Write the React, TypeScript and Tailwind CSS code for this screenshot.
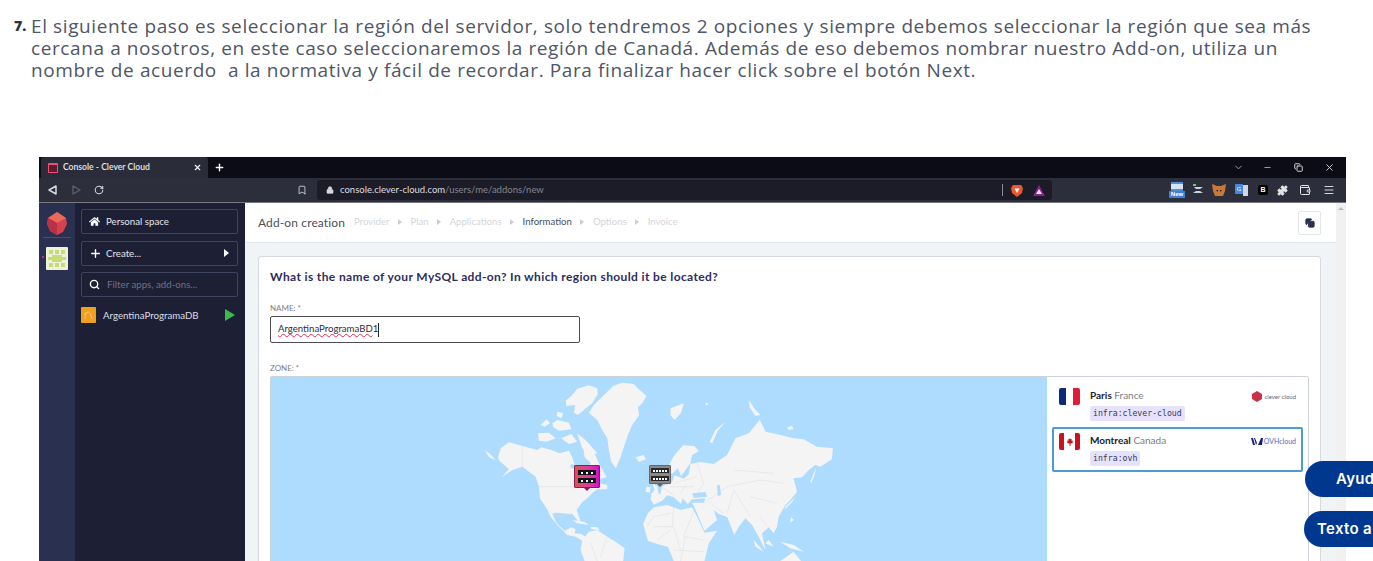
import React from 'react';
import { ChevronDown, Lock, Minus, Plus, RotateCw, Search, X, Menu, Bookmark, Puzzle, Wallet, Copy } from 'lucide-react';
import { FaHome } from 'react-icons/fa';

const uiFont = "font-['Lato','Noto_Sans',sans-serif]";

function Crumb({ label, active }: { label: string; active?: boolean }) {
  return <span className={active ? 'text-[#4a4d5a]' : 'text-[#d3d6dc]'}>{label}</span>;
}

function CrumbArrow() {
  return <span className="mx-[8.5px] w-0 h-0 border-y-[3px] border-y-transparent border-l-[4px] border-l-[#c9ccd2]" />;
}

function ExtensionIcons() {
  return (
    <div className="flex items-center ml-[117px] h-full">
      <div className="w-[16px] h-[16px] flex flex-col items-center">
        <div className="w-[12px] h-[9px] bg-[#d5e2f2] border-y-2 border-[#4f8ed8]" />
        <div className="w-[16px] h-[7px] bg-[#3f7fd4] text-white text-[6px] leading-[7px] text-center font-bold font-['Liberation_Sans',sans-serif]">New</div>
      </div>
      <svg className="ml-[7px]" width="12" height="12" viewBox="0 0 12 12">
        <rect x="1" y="0" width="3" height="2" fill="#4ade50" />
        <path d="M2 3h9L8 5H4zM1 9l3-2h4l3 2z" fill="#c9d6dd" />
      </svg>
      <svg className="ml-[8px]" width="14" height="12" viewBox="0 0 14 12">
        <path d="M0 0l5 2h4l5-2-1 7-2 5H3L1 7z" fill="#c87838" />
        <path d="M4 6h2v2zM10 6H8v2z" fill="#2a2016" />
      </svg>
      <div className="ml-[9px] w-[13px] h-[12px] flex">
        <div className="w-[8px] h-[10px] bg-[#4a88e0] rounded-[1px] text-white text-[6px] leading-[10px] text-center">G</div>
        <div className="w-[5px] h-[11px] mt-[1px] bg-[#cfd8e6]" />
      </div>
      <div className="ml-[10px] w-[10px] h-[10px] bg-black rounded-[2px] text-white text-[7px] leading-[10px] text-center font-bold font-['Liberation_Sans',sans-serif]">B</div>
      <Puzzle className="ml-[9px] fill-[#e4e4e8] text-[#e4e4e8]" size={11} />
      <Wallet className="ml-[11px] text-[#e4e4e8]" size={12} />
      <Menu className="ml-[12px] text-[#d5d5da]" size={12} />
    </div>
  );
}

function Browser() {
  return (
    <div className={`${uiFont}`}>
      <div className="h-[21px] bg-[#0c0c17] flex items-center pl-[2px] text-white">
        <div className="w-[167px] h-full bg-[#2b2c39] flex items-center pl-[7px] rounded-t-[3px]">
          <span className="w-[10px] h-[10px] border border-[#f0506e] border-t-2 bg-[#5e1c34] rounded-[1px] shrink-0" />
          <span className="ml-[5px] text-[8.6px] font-semibold text-[#e6e6ea]">Console - Clever Cloud</span>
          <X className="ml-auto mr-[6px] text-white" size={9} strokeWidth={3} />
        </div>
        <Plus className="ml-[6px]" size={11} strokeWidth={3} />
        <ChevronDown className="ml-auto text-[#a5a6ad]" size={11} />
        <Minus className="ml-[19px] text-[#c9c9ce]" size={9} />
        <Copy className="ml-[22px] text-[#dcdce0]" size={9} strokeWidth={2.5} />
        <X className="ml-[21px] mr-[11px] text-[#dcdce0]" size={11} />
      </div>
      <div className="h-[25px] bg-[#2d2e3c] border-b border-[#777883] flex items-center pl-[9px] text-[#d8d8dd]">
        <svg width="9" height="10" viewBox="0 0 9 10">
          <path d="M8 1v8L1 5z" fill="none" stroke="#d8d8dd" strokeWidth="1.5" strokeLinejoin="round" />
        </svg>
        <svg className="ml-[15px]" width="9" height="10" viewBox="0 0 9 10">
          <path d="M1 1v8l7-4z" fill="none" stroke="#5e5f6b" strokeWidth="1.3" strokeLinejoin="round" />
        </svg>
        <RotateCw className="ml-[13px]" size={10} strokeWidth={2.5} />
        <Bookmark className="ml-[193px]" size={10} strokeWidth={2} />
        <div className="ml-[10px] w-[735px] h-[20px] rounded-[3px] bg-[#1b1c28] flex items-center pl-[9px] shrink-0">
          <Lock className="fill-[#d8d8dd]" size={8} />
          <span className="ml-[6px] text-[9.5px] text-[#dddde2]">
            console.clever-cloud.com<span className="text-[#85868f]">/users/me/addons/new</span>
          </span>
          <span className="ml-auto w-px h-[12px] bg-[#8a8b94]" />
          <svg className="ml-[8px]" width="12" height="13" viewBox="0 0 12 13">
            <path d="M2 1h8l2 3-1 5-5 4-5-4-1-5z" fill="#e9582e" />
            <path d="M3.5 4.5h5L6 9z" fill="#fff" />
          </svg>
          <svg className="ml-[10px] mr-[7px]" width="12" height="11" viewBox="0 0 12 11">
            <path d="M6 0l6 11H0z" fill="#8b1f8f" />
            <path d="M6 4l3 5H3z" fill="#f3e4e9" />
          </svg>
        </div>
        <ExtensionIcons />
      </div>
    </div>
  );
}

function SideButton({ children }: { children: React.ReactNode }) {
  return (
    <div className="h-[25px] border border-[#3d4360] rounded-[2px] flex items-center pl-[7px] text-[9.7px] text-[#e4e5ea]">
      {children}
    </div>
  );
}

function Sidebar() {
  return (
    <div className={`flex shrink-0 ${uiFont}`}>
      <div className="w-[36px] bg-[#2a3050] flex flex-col items-center pt-[9px] relative">
        <svg width="20" height="23" viewBox="0 0 20 23">
          <path d="M10 0l9 6 1 6-4 8-6 3-7-4-3-7 1-6z" fill="#d8404e" />
          <path d="M10 0l9 6-9 5-9-5z" fill="#e96a58" />
          <path d="M10 11v12l-7-4-3-7 1-6z" fill="#b8324a" />
        </svg>
        <div className="w-[28px] h-px bg-[#4a506c] mt-[2px]" />
        <svg className="mt-[9px]" width="22" height="23" viewBox="0 0 22 23">
          <rect width="22" height="23" rx="1" fill="#eef2d8" />
          <path d="M3 3h4v4H3zM9 3h4v4H9zM15 3h4v4h-4zM6 8h10v7H6zM2 10h4v3H2zM16 10h4v3h-4zM3 16h4v4H3zM15 16h4v4h-4zM9 16h4v4H9z" fill="#c6dc78" />
        </svg>
        <span className="absolute left-[3px] top-[53px] w-[2px] h-[2px] rounded-full bg-[#f0308c]" />
      </div>
      <div className="w-[170px] bg-[#1d2035] pl-[6px] pr-[7px] pt-[6px] flex flex-col gap-[6.5px]">
        <SideButton>
          <FaHome className="text-white" size={11} />
          <span className="ml-[6px]">Personal space</span>
        </SideButton>
        <SideButton>
          <Plus className="text-white" size={13} strokeWidth={2.5} />
          <span className="ml-[4px]">Create...</span>
          <span className="ml-auto mr-[8px] w-0 h-0 border-y-[4px] border-y-transparent border-l-[5px] border-l-white" />
        </SideButton>
        <SideButton>
          <Search className="text-white" size={11} strokeWidth={3} />
          <span className="ml-[7px] text-[#6d7186]">Filter apps, add-ons...</span>
        </SideButton>
        <div className="flex items-center mt-[3px] h-[17px] text-[9.7px] text-[#dcdde3]">
          <span className="w-[15px] h-[16px] rounded-[1px] bg-[#f0a020] shrink-0 flex items-center justify-center">
            <svg width="11" height="11" viewBox="0 0 11 11">
              <path d="M2 9C2 5 3 2 5 2s3 3 4 7M1 4c2-1 3-1 4-2" fill="none" stroke="#f6cf86" strokeWidth="0.8" />
            </svg>
          </span>
          <span className="ml-[7px]">ArgentinaProgramaDB</span>
          <span className="ml-auto mr-[3px] w-0 h-0 border-y-[6px] border-y-transparent border-l-[10px] border-l-[#3dba4e]" />
        </div>
      </div>
    </div>
  );
}

function WorldMap() {
  // land shapes, traced by hand from the screenshot
  return (
    <svg className="w-full h-full block blur-[0.3px]" viewBox="-510 21 2331 552" preserveAspectRatio="none">
      <rect x="-510" y="21" width="2331" height="552" fill="#aedcff" />
      <g fill="#f4f4f4">
        {/* greenland and the arctic islands */}
        <path d="M518 48 545 38 580 42 592 55 618 78 605 100 592 112 596 135 575 165 562 195 552 225 540 262 526 295 512 275 505 240 500 205 485 180 470 150 445 128 460 105 480 85z" />
        <path d="M392 78 410 56 445 46 470 55 472 72 455 100 432 118 412 135 400 128 404 105 378 108 375 92z" />
        <path d="M350 125 368 130 362 145 348 138zM300 165 318 148 328 160 312 170zM335 160 350 150 385 158 392 178 355 182 338 172zM292 190 325 188 345 205 318 215 295 212zM362 205 392 192 410 215 385 222zM410 190 440 215 470 250 455 255 425 235z" />
        {/* north and central america */}
        <path d="M132 240 148 252 165 270 145 262zM172 262 180 235 205 217 245 228 290 240 302 232 332 240 358 250 385 242 395 262 402 285 420 300 440 302 450 278 432 262 428 232 462 250 476 282 498 322 480 326 470 338 500 345 500 358 470 358 452 372 440 385 425 396 408 420 420 455 412 452 395 432 365 430 345 428 335 432 348 460 372 482 392 472 405 478 402 490 422 492 440 505 425 512 405 500 380 495 350 465 330 440 318 415 298 385 295 350 285 320 245 290 215 300 182 322 205 298 176 272z" />
        <path d="M395 450 430 455 445 465 410 460zM450 470 470 472 478 480 452 478z" />
        {/* south america */}
        <path d="M425 510 445 485 470 480 500 500 525 515 552 535 548 573 432 573 420 540z" />
        {/* small islands in the north atlantic and arctic */}
        <path d="M585 262 610 255 616 268 595 276zM636 342 650 348 655 372 630 375 642 360zM618 350 630 352 628 368 615 365zM690 115 730 100 722 128 702 150 690 135zM795 100 804 98 798 108zM925 90 945 120 960 135 945 138 928 112zM808 215 825 180 855 155 832 182 815 220zM1040 172 1055 168 1060 178 1045 180z" />
        {/* scandinavia */}
        <path d="M680 296 700 258 728 226 762 228 775 244 755 255 750 280 735 300 722 318 712 295 695 312z" />
        {/* eurasia */}
        <path d="M630 388 634 372 660 372 664 350 695 336 702 316 730 326 745 312 750 282 780 276 820 282 860 255 885 205 925 190 958 150 976 185 1020 195 1060 205 1090 208 1130 230 1178 235 1175 268 1140 290 1125 285 1105 300 1085 322 1060 325 1070 365 1050 390 1035 405 1015 440 1010 470 1000 490 985 472 965 490 975 540 955 500 935 465 915 445 895 470 882 495 860 440 835 432 820 420 830 450 792 482 768 425 755 398 790 398 795 385 755 388 742 402 726 385 722 402 700 382 680 376 665 392 640 404z" />
        {/* africa */}
        <path d="M608 462 622 430 640 412 680 405 720 420 755 412 772 445 792 488 830 482 805 520 792 573 700 573 682 530 650 522 622 512z" />
        {/* japan, sakhalin, indonesia, australia */}
        <path d="M1110 335 1128 292 1122 318 1112 340zM1035 410 1062 385 1072 372 1056 395 1034 418zM985 510 1000 530 975 520zM1020 515 1060 525 1090 545 1050 535zM1020 573 1060 545 1082 573zM940 510 970 545 945 530zM1052 442 1060 450 1050 458z" />
      </g>
      {/* inland water */}
      <path d="M755 370 795 366 800 380 760 384z" fill="#aedcff" />
      <path d="M392 282 402 284 398 296 388 292z" fill="#aedcff" />
      <path d="M830 345 838 345 842 375 832 378z" fill="#aedcff" />
      <g fill="none" stroke="#dcdcdc" strokeWidth="1.5">
        <path d="M295 350H400M245 228V290M322 420 352 440 395 432M372 482 392 472" />
        <path d="M450 520 470 573M500 500 480 560" />
        <path d="M640 470H700L720 540M700 410 695 470M760 422 730 500 790 510M650 510 690 480M620 470 640 440 690 430M735 500 720 573M700 540 790 545" />
        <path d="M790 400 860 350 960 330 1030 340M770 280 790 340 760 385M860 430 880 360 930 440M700 340 770 320M880 300 1000 310M740 340 720 370M760 350 690 350M665 352 700 375M810 400 850 430M930 380 1010 400M960 440 980 470" />
      </g>
    </svg>
  );
}

function ServerMarker({ className, tail, dots, lines }: { className: string; tail: string; dots: number; lines: string }) {
  return (
    <div className={`absolute rounded-[1px] flex flex-col items-center justify-center gap-[3px] ${className}`}>
      {[0, 1].map((row) => (
        <div key={row} className={`w-[18px] h-[5px] flex items-center justify-around px-[1px] ${lines}`}>
          {Array.from({ length: dots }).map((_, i) => (
            <span key={i} className="w-[2px] h-[2px] bg-white" />
          ))}
        </div>
      ))}
      <span className={`absolute -bottom-[4px] w-0 h-0 border-x-[3px] border-x-transparent border-t-[3px] ${tail}`} />
    </div>
  );
}

function Zone({ flag, city, country, chip, logo, selected }: { flag: React.ReactNode; city: string; country: string; chip: string; logo: React.ReactNode; selected?: boolean }) {
  return (
    <div className={`h-[45px] rounded-[2px] flex pl-[5px] pr-[5px] pt-[4px] border-2 ${selected ? 'border-[#4a9bd8]' : 'border-transparent'}`}>
      {flag}
      <div className="ml-[10px]">
        <div className="text-[10px] leading-[14px] text-[#7b7d85]">
          <span className="font-bold text-[#20222c]">{city}</span> {country}
        </div>
        <div className="mt-[4px] w-fit h-[15px] px-[3px] rounded-[2px] bg-[#e6e2fb] text-[8.2px] leading-[15px] text-[#3b3a55] font-['DejaVu_Sans_Mono',monospace]">
          {chip}
        </div>
      </div>
      <div className="ml-auto mt-[3px]">{logo}</div>
    </div>
  );
}

function FranceFlag() {
  return (
    <div className="w-[21px] h-[17px] flex rounded-[2px] overflow-hidden shrink-0">
      <span className="flex-1 bg-[#0d2a78]" />
      <span className="flex-1 bg-white" />
      <span className="flex-1 bg-[#e01c3c]" />
    </div>
  );
}

function CanadaFlag() {
  return (
    <div className="w-[21px] h-[17px] flex rounded-[2px] overflow-hidden shrink-0">
      <span className="w-[5px] bg-[#c8141c]" />
      <span className="flex-1 bg-white flex items-center justify-center">
        <svg width="8" height="8" viewBox="0 0 8 8">
          <path d="M4 0l1 1.500 1-.5-.5 2 1.500-.5L6.500 4 7 5 4.500 5.500V8h-1V5.500L1 5l.5-1L1 2.500l1.500.5L2 1l1 .5z" fill="#c8141c" />
        </svg>
      </span>
      <span className="w-[5px] bg-[#c8141c]" />
    </div>
  );
}

function ZonePanel() {
  return (
    <div className="w-[261px] shrink-0 bg-white px-[5px] pt-[5px] flex flex-col gap-0">
      <Zone
        flag={<FranceFlag />}
        city="Paris"
        country="France"
        chip="infra:clever-cloud"
        logo={
          <div className="flex items-center">
            <svg width="10" height="11" viewBox="0 0 10 11">
              <path d="M5 0l5 3v5l-5 3-5-3V3z" fill="#c8324a" />
            </svg>
            <span className="ml-[2px] text-[6px] text-[#5f5f70]">clever cloud</span>
          </div>
        }
      />
      <Zone
        selected
        flag={<CanadaFlag />}
        city="Montreal"
        country="Canada"
        chip="infra:ovh"
        logo={
          <div className="flex items-center">
            <svg width="12" height="7" viewBox="0 0 12 7">
              <path d="M0 0h2l2 7H2zM3 0h1l2 5-1 2zM7 7l3-7h2l-1 7z" fill="#14227c" />
            </svg>
            <span className="ml-[1px] text-[7px] text-[#4a6cc0]">OVHcloud</span>
          </div>
        }
      />
    </div>
  );
}

function Content() {
  return (
    <div className={`flex-1 min-w-0 bg-[#f1f4f7] ${uiFont}`}>
      <div className="h-[40px] bg-white border-b border-[#e3e6ea] flex items-center pl-[13px] pr-[15px]">
        <span className="text-[12px] text-[#4d4f5a] tracking-[0.12px]">Add-on creation</span>
        <div className="ml-[9px] flex items-center text-[9.6px]">
          <Crumb label="Provider" />
          <CrumbArrow />
          <Crumb label="Plan" />
          <CrumbArrow />
          <Crumb label="Applications" />
          <CrumbArrow />
          <Crumb label="Information" active />
          <CrumbArrow />
          <Crumb label="Options" />
          <CrumbArrow />
          <Crumb label="Invoice" />
        </div>
        <div className="ml-auto w-[23px] h-[24px] bg-white border border-[#e3e6ea] rounded-[2px] flex items-center justify-center">
          <Copy className="text-[#2a3050] fill-[#2a3050]" size={10} />
        </div>
      </div>
      <div className="pt-[13px] pl-[13px] pr-[15px]">
        <div className="h-[400px] bg-white border border-[#d5d9e0] rounded-[3px] px-[11px] pt-[12px]">
          <h2 className="text-[12px] leading-[16px] font-bold text-[#2e2d5b] tracking-[0.37px]">
            What is the name of your MySQL add-on? In which region should it be located?
          </h2>
          <div className="mt-[18px] text-[8px] leading-[10px] text-[#7b7d85]">NAME: *</div>
          <div className="mt-[3px] w-[310px] h-[27px] border border-[#4c4c52] rounded-[2px] flex items-center pl-[7px] text-[9.6px] text-[#2e2f38]">
            <span className="underline decoration-wavy decoration-[#e0304a] decoration-[1px]">ArgentinaProgramaBD</span>1
            <span className="w-px h-[14px] bg-[#222]" />
          </div>
          <div className="mt-[20px] text-[8px] leading-[10px] text-[#7b7d85]">ZONE: *</div>
          <div className="mt-[3px] h-[300px] border border-[#cdd1d8] rounded-t-[2px] flex">
            <div className="relative flex-1 min-w-0 h-[184px] overflow-hidden">
              <WorldMap />
              <ServerMarker className="left-[303px] top-[88px] w-[26px] h-[23px] border border-[#8e1f4d] bg-linear-to-r from-[#d9534f] to-[#d600c8]" tail="border-t-[#a01060]" dots={3} lines="bg-[#141018]" />
              <ServerMarker className="left-[378px] top-[88px] w-[22px] h-[19px] border border-[#666] bg-[#8a8a8a]" tail="border-t-[#666]" dots={5} lines="bg-[#2a2a2a]" />
            </div>
            <ZonePanel />
          </div>
        </div>
      </div>
    </div>
  );
}

export default function App() {
  return (
    <div className="relative h-[561px] w-[1373px] overflow-hidden bg-white">
      <div className="pl-[14px] pt-[15px] flex text-[#4f5666] font-['Open_Sans',sans-serif] text-[19px] leading-[22px] tracking-[0.6px]">
        <span className="w-[17px] shrink-0 text-[#2d3340] font-extrabold text-[14px] tracking-normal">7.</span>
        <p className="whitespace-pre">
          {'El siguiente paso es seleccionar la región del servidor, solo tendremos 2 opciones y siempre debemos seleccionar la región que sea más\ncercana a nosotros, en este caso seleccionaremos la región de Canadá. Además de eso debemos nombrar nuestro Add-on, utiliza un\nnombre de acuerdo  a la normativa y fácil de recordar. Para finalizar hacer click sobre el botón Next.'}
        </p>
      </div>

      <div className="ml-[39px] mt-[76px] w-[1307px]">
        <Browser />
        <div className="flex h-[400px] overflow-hidden">
          <Sidebar />
          <Content />
          <div className="w-[10px] bg-[#f1f1f1] flex justify-center pt-[4px] shrink-0">
            <span className="w-0 h-0 border-x-[3px] border-x-transparent border-b-[3px] border-b-[#bbb]" />
          </div>
        </div>
      </div>

      <div className="absolute left-[1305px] top-[461px] w-[110px] h-[36px] rounded-l-full bg-[#00388f] flex items-center pl-[31px] text-white text-[15px] font-semibold tracking-[0.3px] font-['Inter',sans-serif]">
        Ayuda
      </div>
      <div className="absolute left-[1304px] top-[511px] w-[110px] h-[36px] rounded-l-full bg-[#00388f] flex items-center pl-[13px] text-white text-[15px] font-semibold tracking-[0.3px] font-['Inter',sans-serif] whitespace-nowrap">
        Texto a voz
      </div>
    </div>
  );
}
